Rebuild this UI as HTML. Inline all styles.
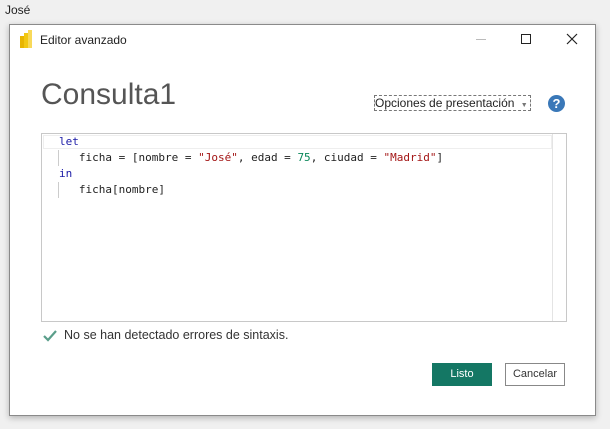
<!DOCTYPE html>
<html><head><meta charset="utf-8"><style>
*{margin:0;padding:0;box-sizing:border-box}
body{width:610px;height:429px;background:#f0f0f0;position:relative;overflow:hidden;font-family:"Liberation Sans",sans-serif;}
.abs{position:absolute}
.dlg{left:9px;top:24px;width:587px;height:392px;background:#fff;border:1px solid #8a8a8a;box-shadow:0 2px 6px rgba(0,0,0,.25)}
.code{font-family:"DejaVu Sans Mono","Liberation Mono",monospace;font-size:11px;color:#222;white-space:pre;line-height:16px}
.kw{color:#1a1aa6}.str{color:#a31515}.num{color:#098658}
</style></head><body>
<div class="abs" style="left:5px;top:3px;font-size:12px;color:#222">José</div>
<div class="abs dlg"></div>
<div class="abs" style="left:20px;top:36px;width:4px;height:12px;background:#e8b500"></div>
<div class="abs" style="left:24px;top:33px;width:4px;height:15px;background:#f2c811"></div>
<div class="abs" style="left:28px;top:30px;width:4px;height:18px;background:#f8d95a"></div>
<div class="abs" style="left:40px;top:33px;font-size:12px;color:#222">Editor avanzado</div>
<div class="abs" style="left:476px;top:39px;width:10px;height:1px;background:#bbb"></div>
<div class="abs" style="left:521px;top:34px;width:10px;height:10px;border:1px solid #222"></div>
<svg class="abs" style="left:566px;top:33px" width="12" height="12"><path d="M1 1L11 11M11 1L1 11" stroke="#222" stroke-width="1.2"/></svg>
<div class="abs" style="left:41px;top:78px;font-size:30px;color:#555;font-weight:300">Consulta1</div>
<div class="abs" style="left:374px;top:95px;width:157px;height:16px;border:1px dashed #777;font-size:12px;color:#222;line-height:14px">Opciones de presentación <span style="font-size:7px;color:#777;margin-left:3px">▼</span></div>
<div class="abs" style="left:548px;top:95px;width:17px;height:17px;border-radius:50%;background:#3a78b8;color:#fff;font-weight:bold;font-size:13px;text-align:center;line-height:17px">?</div>
<div class="abs" style="left:41px;top:133px;width:526px;height:189px;border:1px solid #c8c8c8"></div>
<div class="abs" style="left:43px;top:135px;width:509px;height:14px;border:1px solid #eee"></div>
<div class="abs" style="left:552px;top:134px;width:1px;height:187px;background:#e4e4e4"></div>
<div class="abs" style="left:58px;top:150px;width:1px;height:16px;background:#ccc"></div>
<div class="abs" style="left:58px;top:182px;width:1px;height:16px;background:#ccc"></div>
<div class="abs code" style="left:59px;top:134px"><span class="kw">let</span>
   ficha = [nombre = <span class="str">"José"</span>, edad = <span class="num">75</span>, ciudad = <span class="str">"Madrid"</span>]
<span class="kw">in</span>
   ficha[nombre]</div>
<svg class="abs" style="left:42px;top:329px" width="16" height="14"><path d="M2 7L6 11L14 2" stroke="#5a9e8a" stroke-width="2.2" fill="none"/></svg>
<div class="abs" style="left:64px;top:328px;font-size:12.5px;color:#333">No se han detectado errores de sintaxis.</div>
<div class="abs" style="left:432px;top:363px;width:60px;height:23px;background:#147764;color:#fff;font-size:11px;text-align:center;line-height:23px">Listo</div>
<div class="abs" style="left:505px;top:363px;width:60px;height:23px;border:1px solid #888;color:#333;font-size:11px;text-align:center;line-height:21px">Cancelar</div>
</body></html>
